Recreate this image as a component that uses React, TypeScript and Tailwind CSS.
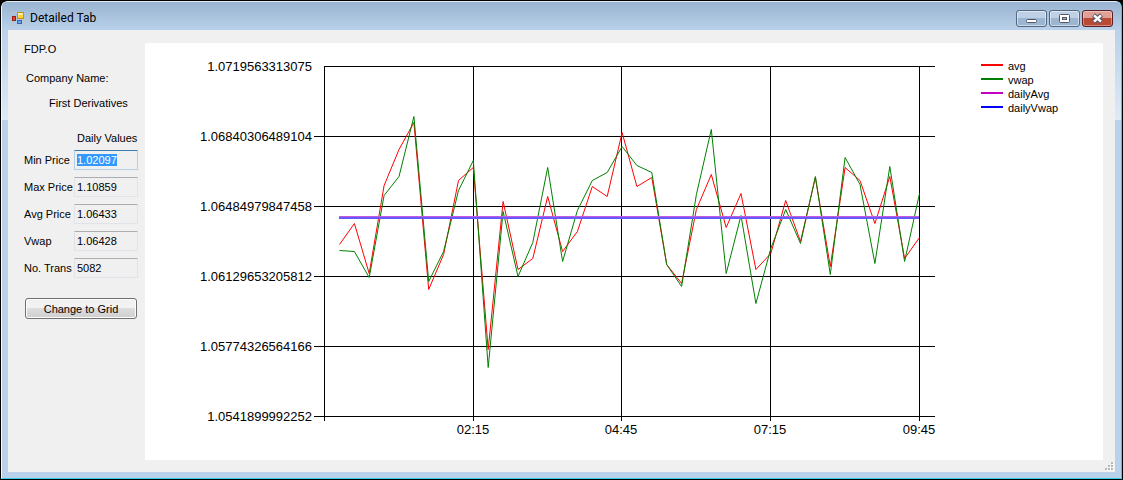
import React, { useEffect, useRef } from 'react';

const fields = [
  { id: 'min-price', label: 'Min Price', value: '1.02097' },
  { id: 'max-price', label: 'Max Price', value: '1.10859' },
  { id: 'avg-price', label: 'Avg Price', value: '1.06433' },
  { id: 'vwap', label: 'Vwap', value: '1.06428' },
  { id: 'no-trans', label: 'No. Trans', value: '5082' },
];

const yTicks = [
  '1.0719563313075',
  '1.06840306489104',
  '1.06484979847458',
  '1.06129653205812',
  '1.05774326564166',
  '1.0541899992252',
];

const xTicks = [
  { label: '', x: 0 },
  { label: '02:15', x: 149 },
  { label: '04:45', x: 297 },
  { label: '07:15', x: 446 },
  { label: '09:45', x: 595 },
];

const legend = [
  { name: 'avg', color: '#ff0000' },
  { name: 'vwap', color: '#008000' },
  { name: 'dailyAvg', color: '#c000c0' },
  { name: 'dailyVwap', color: '#0000ff' },
];

// Distances below the top of the plot area, one every 15 minutes
const avg = [
  178, 157, 207, 119, 83, 56, 223, 188, 114, 101, 283, 135, 203, 192, 130, 185, 165, 120, 130, 66,
  120, 111, 198, 217, 143, 108, 161, 127, 203, 187, 134, 175, 111, 200, 101, 114, 157, 110, 192, 171,
];
const vwap = [
  184, 185, 211, 129, 110, 50, 215, 185, 124, 94, 301, 145, 210, 176, 101, 195, 144, 114, 106, 80,
  99, 106, 198, 220, 128, 63, 207, 149, 237, 182, 143, 177, 110, 208, 91, 118, 197, 100, 195, 127,
];

const toPoints = (values: number[]) =>
  values.map((v, i) => `${(15.5 + (i * 580) / 39).toFixed(1)},${v + 0.5}`).join(' ');

function AppIcon() {
  return (
    <svg width="14" height="14" viewBox="0 0 14 14" className="shrink-0" aria-hidden="true">
      <path d="M.5 4V1.500h5M.5 10v3.500h4M13.500 8v5.500h-2" fill="none" stroke="#c3c3c3" />
      <rect x="1.500" y="5.500" width="3" height="4" fill="#e0452f" stroke="#9c1f12" />
      <rect x="6.500" y="1.500" width="6" height="6" fill="#ffd23c" stroke="#c8930a" />
      <path d="M7 3.500h5M7 2.500h5" stroke="#fff0a0" />
      <rect x="6.500" y="9.500" width="4" height="3" fill="#6ba0f0" stroke="#3366bb" />
    </svg>
  );
}

const captionButton =
  'w-[31px] h-[17px] flex items-center justify-center rounded-[3px] border border-[#53667f] shadow-[inset_0_0_0_1px_rgba(255,255,255,0.5)]';
const captionBlue = 'bg-linear-to-b from-[#bed0e5] from-45% to-[#9cb6d2] to-50%';

function TitleBar() {
  return (
    <header className="flex h-7 items-start justify-between pl-[9px] pr-[8px] bg-linear-to-b from-[#99b4d1] to-[#b9d1ea]">
      <div className="flex items-center gap-[5px] pt-2">
        <AppIcon />
        <h1 className="font-[Roboto,sans-serif] text-[12px] leading-4">Detailed Tab</h1>
      </div>
      <div className="flex gap-[2px] pt-2">
        <button type="button" aria-label="Minimize" className={`${captionButton} ${captionBlue}`}>
          <svg width="11" height="11" viewBox="0 0 11 11">
            <rect x=".5" y="6.500" width="10" height="3" rx="1" fill="#fff" stroke="#535666" />
          </svg>
        </button>
        <button type="button" aria-label="Maximize" className={`${captionButton} ${captionBlue}`}>
          <svg width="11" height="9" viewBox="0 0 11 9">
            <rect x=".5" y=".5" width="10" height="8" rx="1" fill="#fff" stroke="#535666" />
            <rect x="3.500" y="3.500" width="4" height="2" fill="#9cb6d2" stroke="#535666" />
          </svg>
        </button>
        <button
          type="button"
          aria-label="Close"
          className="w-[31px] h-[17px] flex items-center justify-center rounded-[3px] border border-[#5c1f24] bg-linear-to-b from-[#dfa096] from-45% to-[#bb4a35] to-50% shadow-[inset_0_0_0_1px_rgba(255,255,255,0.35)]"
        >
          <svg width="13" height="11" viewBox="0 0 13 11">
            <path d="M2.500 2l8 7M10.500 2l-8 7" stroke="#535666" strokeWidth="4.500" />
            <path d="M3 2.400l7 6.200M10 2.400l-7 6.200" stroke="#fff" strokeWidth="2.600" />
          </svg>
        </button>
      </div>
    </header>
  );
}

function SidePanel() {
  const firstField = useRef<HTMLInputElement>(null);

  useEffect(() => {
    firstField.current?.focus();
    firstField.current?.select();
  }, []);

  return (
    <aside className="w-[137px] shrink-0 pl-4 pt-3 text-[11px] leading-[14px]">
      <p>FDP.O</p>
      <p className="mt-[15px] pl-[2px]">Company Name:</p>
      <p className="mt-[11px] pl-[25px]">First Derivatives</p>
      <p className="mt-[21px] pl-[53px]">Daily Values</p>
      <div className="mt-[5px] flex flex-col gap-[7px]">
        {fields.map((field, i) => (
          <div key={field.id} className="flex h-5 items-center">
            <label htmlFor={field.id} className="w-[50px] shrink-0 whitespace-nowrap">
              {field.label}
            </label>
            <input
              id={field.id}
              ref={i === 0 ? firstField : undefined}
              readOnly
              defaultValue={field.value}
              className="h-5 w-16 rounded-[1px] border border-[#e2e3ea] border-t-[#abadb3] bg-[#f0f0f0] px-[2px] leading-[14px] outline-none selection:bg-[#3399ff] selection:text-white focus:border-[#b5cfe7] focus:border-t-[#3d7bad]"
            />
          </div>
        ))}
      </div>
      <button
        type="button"
        className="ml-px mt-5 flex h-[21px] w-28 items-center justify-center rounded-[3px] border border-[#707070] bg-linear-to-b from-[#f2f2f2] from-45% via-[#dddddd] via-50% to-[#cfcfcf] shadow-[inset_0_0_0_1px_#fcfcfc]"
      >
        Change to Grid
      </button>
    </aside>
  );
}

function PriceChart() {
  return (
    <svg
      viewBox="0 0 958 417"
      role="img"
      aria-label="Average price and VWAP by time"
      className="block h-auto w-full bg-white"
    >
      <g transform="translate(179 23)">
        {/* Grid and tick marks */}
        <g stroke="#000" shapeRendering="crispEdges">
          {yTicks.map((tick, i) => (
            <line key={tick} x1={i === 0 ? 0 : -10} x2="611" y1={i * 70 + 0.5} y2={i * 70 + 0.5} />
          ))}
          {xTicks.map((tick) => (
            <line key={tick.x} x1={tick.x + 0.5} x2={tick.x + 0.5} y1="0" y2="355" />
          ))}
        </g>

        <g fontSize="13">
          {yTicks.map((tick, i) => (
            <text key={tick} x="-12" y={i * 70 + 5} textAnchor="end">
              {tick}
            </text>
          ))}
          {xTicks.map((tick) => (
            <text key={tick.x} x={tick.x} y="368" textAnchor="middle">
              {tick.label}
            </text>
          ))}
        </g>

        {/* Series */}
        <polyline points={toPoints(avg)} fill="none" stroke="#ff0000" />
        <polyline points={toPoints(vwap)} fill="none" stroke="#008000" />
        <path d="M15 150.500H595" stroke="#c85adc" />
        <path d="M15 152H595" stroke="#665aff" strokeWidth="2" />
      </g>

      <g fontSize="11">
        {legend.map((item, i) => (
          <g key={item.name}>
            <path d={`M836 ${i * 14 + 22}h22`} stroke={item.color} strokeWidth="2" />
            <text x="863" y={i * 14 + 27}>
              {item.name}
            </text>
          </g>
        ))}
      </g>
    </svg>
  );
}

function ResizeGrip() {
  return (
    <svg width="9" height="9" viewBox="0 0 9 9" aria-hidden="true" className="absolute bottom-px right-px">
      <path d="M7 1h2v2H7zM4 4h2v2H4zM7 4h2v2H7zM1 7h2v2H1zM4 7h2v2H4zM7 7h2v2H7z" fill="#fff" />
      <path d="M6 0h2v2H6zM3 3h2v2H3zM6 3h2v2H6zM0 6h2v2H0zM3 6h2v2H3zM6 6h2v2H6z" fill="#b8b8b8" />
    </svg>
  );
}

export default function App() {
  return (
    <div className="bg-black font-['Liberation_Sans',Arial,sans-serif] text-black">
      <div className="overflow-hidden rounded-t-[7px] border border-black">
        <div className="overflow-hidden rounded-t-[6px] border border-b-[#35d0e0] border-l-[#f4f8fc] border-r-[#35d0e0] border-t-[#e3ebf4] bg-[#b9d1ea]">
          <TitleBar />
          <div className="bg-linear-to-b from-[#b9d1ea] to-[#dfeaf6] bg-[length:100%_90px] bg-no-repeat px-[6px] pb-[6px]">
            <main className="relative flex bg-[#f0f0f0]">
              <SidePanel />
              <div className="min-w-0 flex-1 pb-3 pr-3 pt-[13px]">
                <PriceChart />
              </div>
              <ResizeGrip />
            </main>
          </div>
        </div>
      </div>
    </div>
  );
}
